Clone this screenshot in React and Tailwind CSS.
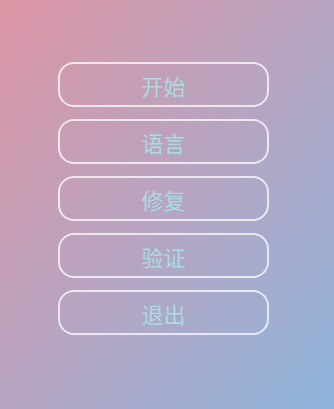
export default function App() {
  const items = ["开始", "语言", "修复", "验证", "退出"];
  return (
    <div
      className="w-[334px] h-[409px] bg-[linear-gradient(to_bottom_right,#dc95a4,#b3a6c4_55%,#8fb4dc)] flex flex-col items-start pt-[62px] gap-[12px] pl-[58px]"
      style={{ fontFamily: '"Noto Sans CJK SC", "Noto Sans", sans-serif' }}
    >
      {items.map((t) => (
        <div
          key={t}
          className="w-[211px] h-[45px] rounded-[16px] border-2 border-white/75 flex items-center justify-center text-[22px] font-normal text-[#aadbe0] leading-none pt-[1px]"
        >
          {t}
        </div>
      ))}
    </div>
  );
}
